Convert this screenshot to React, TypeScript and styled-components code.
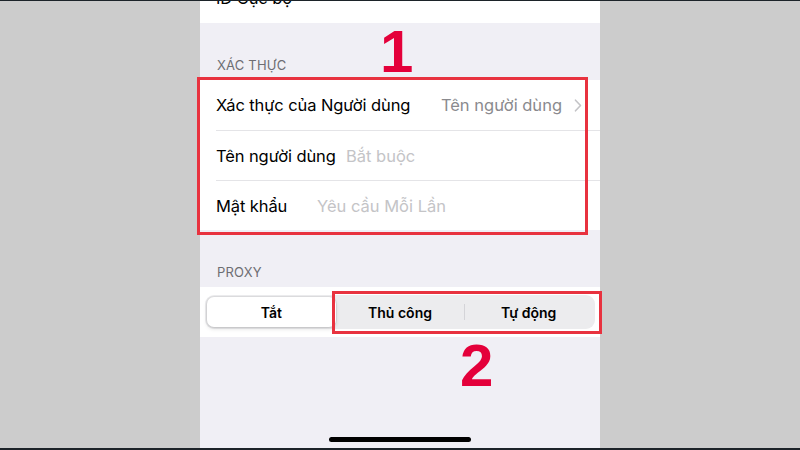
import styled, { createGlobalStyle } from 'styled-components';

const GlobalStyle = createGlobalStyle`
    html, body {
        margin: 0;
        padding: 0;
        background: #1c2329;
    }

    body {
        font-family: Inter, "Noto Sans", "Liberation Sans", sans-serif;
        -webkit-font-smoothing: antialiased;
    }
`;

const authRows = [
    { label: 'Tên người dùng', placeholder: 'Bắt buộc', labelWidth: 130 },
    { label: 'Mật khẩu', placeholder: 'Yêu cầu Mỗi Lần', labelWidth: 101 },
];

const proxyModes = ['Tắt', 'Thủ công', 'Tự động'];

const Chevron = () => (
    <svg width="8" height="13" viewBox="0 0 8 13" fill="none">
        <path d="M1.5 1.2L6.5 6.5L1.5 11.8" stroke="#c4c4c7" strokeWidth="1.6" strokeLinecap="round" strokeLinejoin="round" />
    </svg>
);

const App = () => {
    return (
        <Page>
            <GlobalStyle />
            <Stage>
                <Screen>
                    <TopGroup>
                        <Row>
                            <Label>ID Cục bộ</Label>
                        </Row>
                    </TopGroup>

                    <SectionHeader>XÁC THỰC</SectionHeader>
                    <Group>
                        <Row>
                            <Label>Xác thực của Người dùng</Label>
                            <Value>
                                Tên người dùng
                                <Chevron />
                            </Value>
                        </Row>
                        {authRows.map(row => (
                            <Row key={row.label}>
                                <Label width={row.labelWidth}>{row.label}</Label>
                                <Placeholder>{row.placeholder}</Placeholder>
                            </Row>
                        ))}
                    </Group>

                    <SectionHeader>PROXY</SectionHeader>
                    <SegmentRow>
                        <SegmentTrack>
                            {proxyModes.map((mode, i) => (
                                <Segment key={mode} active={i === 0} divided={i === 2}>
                                    {mode}
                                </Segment>
                            ))}
                        </SegmentTrack>
                    </SegmentRow>

                    <HomeIndicator />
                </Screen>
            </Stage>

            <Marker top={77} left={197} width={391} height={158} />
            <Marker top={291} left={332} width={270} height={43} />
            <Digit top={22} left={380}>1</Digit>
            <Digit top={336} left={460}>2</Digit>
        </Page>
    );
};

const Page = styled.div`
    width: 800px;
    height: 450px;
    padding: 1px 0 2px;
    box-sizing: border-box;
    position: relative;
    overflow: hidden;

    display: flex;
    flex-direction: column;

    background: #1c2329;
`;

const Stage = styled.div`
    flex: 1;
    display: flex;
    justify-content: center;
    background: #cccccc;
`;

const Screen = styled.div`
    width: 400px;
    position: relative;
    overflow: hidden;

    display: flex;
    flex-direction: column;

    background: #f0eff5;
`;

const Group = styled.div`
    background: #ffffff;
    display: flex;
    flex-direction: column;
`;

const TopGroup = styled(Group)`
    margin-top: -28px;
`;

const Row = styled.div`
    height: 50px;
    margin-left: 16px;
    padding-right: 18px;
    box-sizing: border-box;

    display: flex;
    align-items: center;

    font-size: 16.5px;
    color: #000000;

    & + & {
        border-top: 1px solid #e4e4e7;
    }
`;

const Label = styled.span<{ width?: number }>`
    flex: 0 0 ${props => props.width ? `${props.width}px` : 'auto'};
    letter-spacing: -0.1px;
    white-space: nowrap;
`;

const Value = styled.span`
    margin-left: auto;
    display: flex;
    align-items: center;
    gap: 12px;
    color: #8a8a8e;
    white-space: nowrap;
`;

const Placeholder = styled.span`
    color: #c4c4c7;
    white-space: nowrap;
`;

const SectionHeader = styled.div`
    height: 57px;
    padding: 0 0 7px 17px;
    box-sizing: border-box;

    display: flex;
    align-items: flex-end;

    font-size: 13px;
    line-height: 16px;
    letter-spacing: 0.2px;
    color: #6d6d72;
`;

const SegmentRow = styled.div`
    height: 50px;
    padding: 0 5px;
    box-sizing: border-box;

    display: flex;
    align-items: center;

    background: #ffffff;
`;

const SegmentTrack = styled.div`
    flex: 1;
    height: 34px;
    padding: 2px;
    box-sizing: border-box;
    border-radius: 9px;

    display: flex;

    background: #ececee;
`;

const Segment = styled.div<{ active: boolean; divided: boolean }>`
    flex: 1;
    position: relative;

    display: flex;
    align-items: center;
    justify-content: center;

    border-radius: 7px;
    font-size: 14px;
    font-weight: 600;
    color: #000000;

    background: ${props => props.active ? '#ffffff' : 'transparent'};
    box-shadow: ${props => props.active ? '0 0 0 1px rgba(0,0,0,0.06), 0 2px 4px rgba(0,0,0,0.12)' : 'none'};

    &::before {
        content: '';
        display: ${props => props.divided ? 'block' : 'none'};
        position: absolute;
        left: 0;
        top: 7px;
        bottom: 7px;
        width: 1px;
        background: #d4d4d8;
    }
`;

const HomeIndicator = styled.div`
    position: absolute;
    left: 129px;
    bottom: 6px;
    width: 142px;
    height: 5px;
    border-radius: 3px;
    background: #000000;
`;

const Marker = styled.div<{ top: number; left: number; width: number; height: number }>`
    position: absolute;
    top: ${props => props.top}px;
    left: ${props => props.left}px;
    width: ${props => props.width}px;
    height: ${props => props.height}px;
    box-sizing: border-box;
    border: 3px solid #e8323f;
    pointer-events: none;
`;

const Digit = styled.div<{ top: number; left: number }>`
    position: absolute;
    top: ${props => props.top}px;
    left: ${props => props.left}px;
    font-family: "Liberation Sans", Arial, sans-serif;
    font-weight: 700;
    font-size: 60px;
    line-height: 1;
    color: #e4003a;
`;

export default App;
